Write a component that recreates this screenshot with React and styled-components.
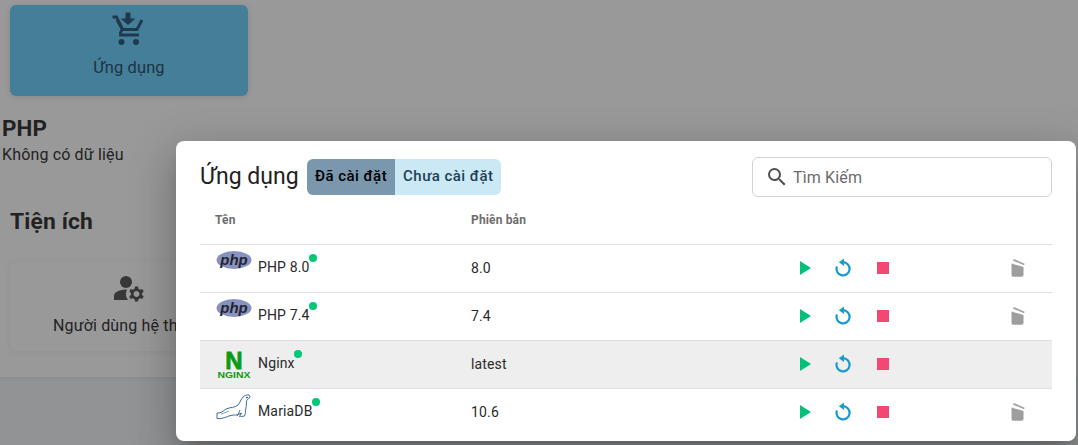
import React from "react";
import styled, { createGlobalStyle } from "styled-components";
import { MdPlayArrow, MdStop, MdManageAccounts, MdSearch } from "react-icons/md";

const Global = createGlobalStyle`
  html, body { margin: 0; padding: 0; height: 100%; overflow: hidden; background: #f3f5f7; }
  * { box-sizing: border-box; }
  body { font-family: Roboto, "Noto Sans", sans-serif; color: #3a3a3a; letter-spacing: 0.15px; }
`;

const Page = styled.div`
  width: 1078px;
  height: 445px;
  position: relative;
  overflow: hidden;
`;
const Content = styled.main`
  height: 377px;
  background: #ffffff;
  padding-top: 5px;
  box-shadow: 0 1px 6px rgba(0, 0, 0, 0.06);
`;
const Tile = styled.div`
  width: 238px;
  height: ${(p) => p.$h || 91}px;
  margin-left: 10px;
  border-radius: 6px;
  background: ${(p) => (p.$active ? "#73d2ff" : "#ffffff")};
  box-shadow: 0 1px 6px rgba(0, 0, 0, ${(p) => (p.$active ? 0.12 : 0.06)});
  display: flex;
  flex-direction: column;
  align-items: center;
  padding-top: ${(p) => p.$top || 5}px;
  font-size: ${(p) => (p.$active ? 16.4 : 16)}px;
  line-height: 24px;
  white-space: nowrap;
`;
const TileLabel = styled.span`
  margin-top: ${(p) => p.$gap}px;
  color: ${(p) => p.$color || "#3a3a3a"};
`;
const Section = styled.section`
  padding-left: 2px;
  margin-top: 20px;
`;
const SectionTitle = styled.h2`
  margin: 0;
  font-size: 22.4px;
  line-height: 24px;
  font-weight: 700;
`;
const SectionText = styled.p`
  margin: 3px 0 0;
  font-size: 16px;
  line-height: 24px;
`;
const ToolsTitle = styled.h2`
  margin: 41px 0 25px 10px;
  font-size: 22.8px;
  line-height: 28px;
  font-weight: 700;
`;
const Backdrop = styled.div`
  position: absolute;
  inset: 0;
  background: rgba(0, 0, 0, 0.4);
`;
const Modal = styled.div`
  position: absolute;
  left: 176px;
  top: 141px;
  width: 900px;
  height: 300px;
  background: #fff;
  border-radius: 8px;
  padding: 16px 24px 0;
  box-shadow: 0 11px 15px -7px rgba(0, 0, 0, 0.2), 0 24px 38px 3px rgba(0, 0, 0, 0.14), 0 9px 46px 8px rgba(0, 0, 0, 0.12);
`;
const Header = styled.div`
  display: flex;
  align-items: center;
  height: 40px;
`;
const Title = styled.h1`
  margin: 0 8px 0 0;
  font-size: 23px;
  font-weight: 400;
  line-height: 40px;
  letter-spacing: 0;
  color: #212121;
  width: 99px;
  white-space: nowrap;
`;
const Toggle = styled.div`
  display: flex;
  height: 36px;
  border-radius: 6px;
  overflow: hidden;
`;
const ToggleBtn = styled.div`
  padding: 0 8px 3px;
  display: flex;
  align-items: center;
  font-size: 15px;
  letter-spacing: 0.45px;
  font-weight: 500;
  background: ${(p) => (p.$on ? "#7a97ae" : "#cbe9f4")};
  color: ${(p) => (p.$on ? "#000" : "#1f3f55")};
`;
const Search = styled.div`
  margin-left: auto;
  width: 300px;
  height: 40px;
  border: 1px solid #d3d3d3;
  border-radius: 6px;
  display: flex;
  align-items: center;
  padding-left: 12px;
  gap: 4px;
  color: #6b6b6b;
  font-size: 16px;
`;
const Row = styled.div`
  display: grid;
  grid-template-columns: 255px 329px 39.5px 39.5px 39.5px 1fr;
  align-items: center;
  height: 48px;
  padding-bottom: 2px;
  border-bottom: 1px solid #e0e0e0;
  background: ${(p) => (p.$hover ? "#eeeeee" : "transparent")};
  font-size: 14px;
  &:last-child { border-bottom: none; }
`;
const HeadCell = styled.div`
  padding-left: ${(p) => p.$pad}px;
  font-size: 12px;
  font-weight: 700;
  color: #6d6d6d;
`;
const NameCell = styled.div`
  display: flex;
  align-items: center;
  padding-left: 16px;
  gap: 6px;
`;
const LogoBox = styled.div`
  width: 36px;
  height: 36px;
  flex: none;
  display: flex;
  align-items: center;
  justify-content: center;
`;
const Name = styled.span`
  position: relative;
  line-height: 20px;
  margin-top: -2px;
  color: #2a2a2a;
`;
const Dot = styled.span`
  position: absolute;
  top: -3px;
  right: -7px;
  width: 8px;
  height: 8px;
  border-radius: 50%;
  background: #00c878;
`;
const Version = styled.div`
  padding-left: 16px;
  color: #2a2a2a;
`;
const Action = styled.div`
  display: flex;
  justify-content: center;
  align-items: center;
  color: ${(p) => p.$color};
`;
const Trash = styled.div`
  display: flex;
  justify-content: flex-end;
  padding-right: 25px;
`;

const CartDown = () => (
  <svg width="36" height="36" viewBox="0 0 36 36" fill="none" stroke="#33607f" strokeWidth="2.8">
    <path d="M1.500 7h4l6 12-2 3.500v2.500h18.500" />
    <path d="M6 10l5.500 9.500h14.500L31 10" />
    <path d="M14.500 2.500h5v6h5l-7.500 6.500-7.500-6.500h5z" fill="#33607f" stroke="none" />
    <circle cx="10.500" cy="32" r="3" fill="#33607f" stroke="none" />
    <circle cx="25" cy="32" r="3" fill="#33607f" stroke="none" />
  </svg>
);
const ReloadIcon = () => (
  <svg width="24" height="24" viewBox="0 0 24 24" fill="none">
    <path d="M12 6.200a6.600 6.600 0 1 1-6.100 4.100" stroke="currentColor" strokeWidth="2.200" />
    <path d="M13 2.500v7.500L7.800 6.300z" fill="currentColor" />
  </svg>
);
const PhpLogo = () => (
  <svg width="36" height="36" viewBox="0 0 36 36">
    <ellipse cx="18" cy="10" rx="17.500" ry="9" fill="#8892bf" />
    <text x="18" y="14.500" textAnchor="middle" fontFamily="'Liberation Sans', sans-serif" fontSize="15" fontWeight="700" fontStyle="italic" letterSpacing="0" fill="#232531">php</text>
  </svg>
);
const NginxLogo = () => (
  <svg width="36" height="36" viewBox="0 0 36 36">
    <text x="18" y="22.500" textAnchor="middle" fontFamily="'Liberation Sans', sans-serif" fontSize="24" fontWeight="700" letterSpacing="0" fill="#0b9a14" stroke="#0b9a14" strokeWidth="0.8">N</text>
    <text x="18" y="32" textAnchor="middle" fontFamily="'Liberation Sans', sans-serif" fontSize="9" fontWeight="700" letterSpacing="0" fill="#0b9a14" textLength="33" lengthAdjust="spacingAndGlyphs">NGINX</text>
  </svg>
);
const MariaLogo = () => (
  <svg width="36" height="36" viewBox="0 0 36 36" fill="none" stroke="#2f5c86" strokeWidth="0.9">
    <path d="M1 19c4 .5 6-2 9-4 4-2 9-1 12-4 2-2 3-6 5-8 1.500-1.500 4-2.500 6-2 1 1 1 2 .5 3-2 1-3 2-3 4 0 3-.5 6-1 9 0 2-.5 4-1 5-2 .5-4 .5-5 .5l2-3.500c-2 1-4 2-6 2-3 0-6 .5-9 2-3 1-6 2-9.500 1.500z" />
    <path d="M24 16c-1 2-1 4-3 6" />
    <path d="M5 20c3-.5 5-2 8-3" strokeWidth="0.6" />
    <circle cx="31" cy="3.500" r="0.6" fill="#2f5c86" />
  </svg>
);
const TrashIcon = () => (
  <svg width="18" height="20" viewBox="0 0 18 20" fill="#9e9e9e">
    <path d="M2.500 5.500l12 3.500V17a1.800 1.800 0 0 1-1.800 1.800H4.300A1.800 1.800 0 0 1 2.500 17z" />
    <path d="M4.700 1l11 4.700-0.700 1.500L4 2.600z" />
  </svg>
);

const apps = [
  { name: "PHP 8.0", version: "8.0", logo: <PhpLogo />, trash: true },
  { name: "PHP 7.4", version: "7.4", logo: <PhpLogo />, trash: true },
  { name: "Nginx", version: "latest", logo: <NginxLogo />, hover: true },
  { name: "MariaDB", version: "10.6", logo: <MariaLogo />, trash: true },
];

export default function App() {
  return (
    <Page>
      <Global />
      <Content>
        <Tile $active>
          <CartDown />
          <TileLabel $gap={10} $color="#2f5670">Ứng dụng</TileLabel>
        </Tile>
        <Section>
          <SectionTitle>PHP</SectionTitle>
          <SectionText>Không có dữ liệu</SectionText>
        </Section>
        <ToolsTitle>Tiện ích</ToolsTitle>
        <Tile $h={90} $top={9}>
          <MdManageAccounts size={36} color="#5c5c5c" />
          <TileLabel $gap={8}>Người dùng hệ thống</TileLabel>
        </Tile>
      </Content>
      <Backdrop />
      <Modal>
        <Header>
          <Title>Ứng dụng</Title>
          <Toggle>
            <ToggleBtn $on>Đã cài đặt</ToggleBtn>
            <ToggleBtn>Chưa cài đặt</ToggleBtn>
          </Toggle>
          <Search>
            <MdSearch size={24} color="#4f4f4f" />
            <span>Tìm Kiếm</span>
          </Search>
        </Header>
        <Row>
          <HeadCell $pad={15}>Tên</HeadCell>
          <HeadCell $pad={16}>Phiên bản</HeadCell>
        </Row>
        {apps.map((a) => (
          <Row key={a.name} $hover={a.hover}>
            <NameCell>
              <LogoBox>{a.logo}</LogoBox>
              <Name>
                {a.name}
                <Dot />
              </Name>
            </NameCell>
            <Version>{a.version}</Version>
            <Action $color="#00c07a"><MdPlayArrow size={24} /></Action>
            <Action $color="#1a9bd0"><ReloadIcon /></Action>
            <Action $color="#f44771"><MdStop size={24} /></Action>
            <Trash>{a.trash && <TrashIcon />}</Trash>
          </Row>
        ))}
      </Modal>
    </Page>
  );
}
